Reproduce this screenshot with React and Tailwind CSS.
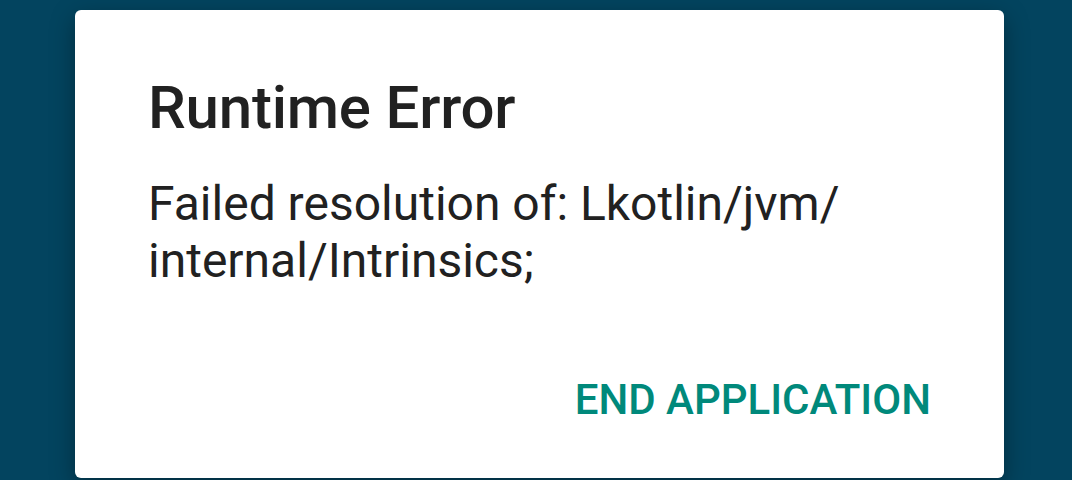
import React from 'react';

export default function App() {
  return (
    <div className="w-full h-[480px] bg-[#03445f] pt-[10px] pl-[75px] overflow-hidden" style={{ fontFamily: 'Roboto, "Noto Sans", sans-serif' }}>
      <div className="w-[929px] h-[468px] bg-white rounded-[6px] shadow-[0_8px_24px_rgba(0,0,0,0.35)] flex flex-col px-[73px] pt-[68px]">
        <h1 className="text-[60px] leading-none font-medium text-[#212121] tracking-[-0.2px]">Runtime Error</h1>
        <p className="mt-[37px] text-[48px] leading-[57px] text-[#212121]">
          Failed resolution of: Lkotlin/jvm/
          <br />
          internal/Intrinsics;
        </p>
        <div className="mt-auto mb-[57px] flex justify-end">
          <button className="text-[42px] leading-none font-medium text-[#00897b]">END APPLICATION</button>
        </div>
      </div>
    </div>
  );
}
